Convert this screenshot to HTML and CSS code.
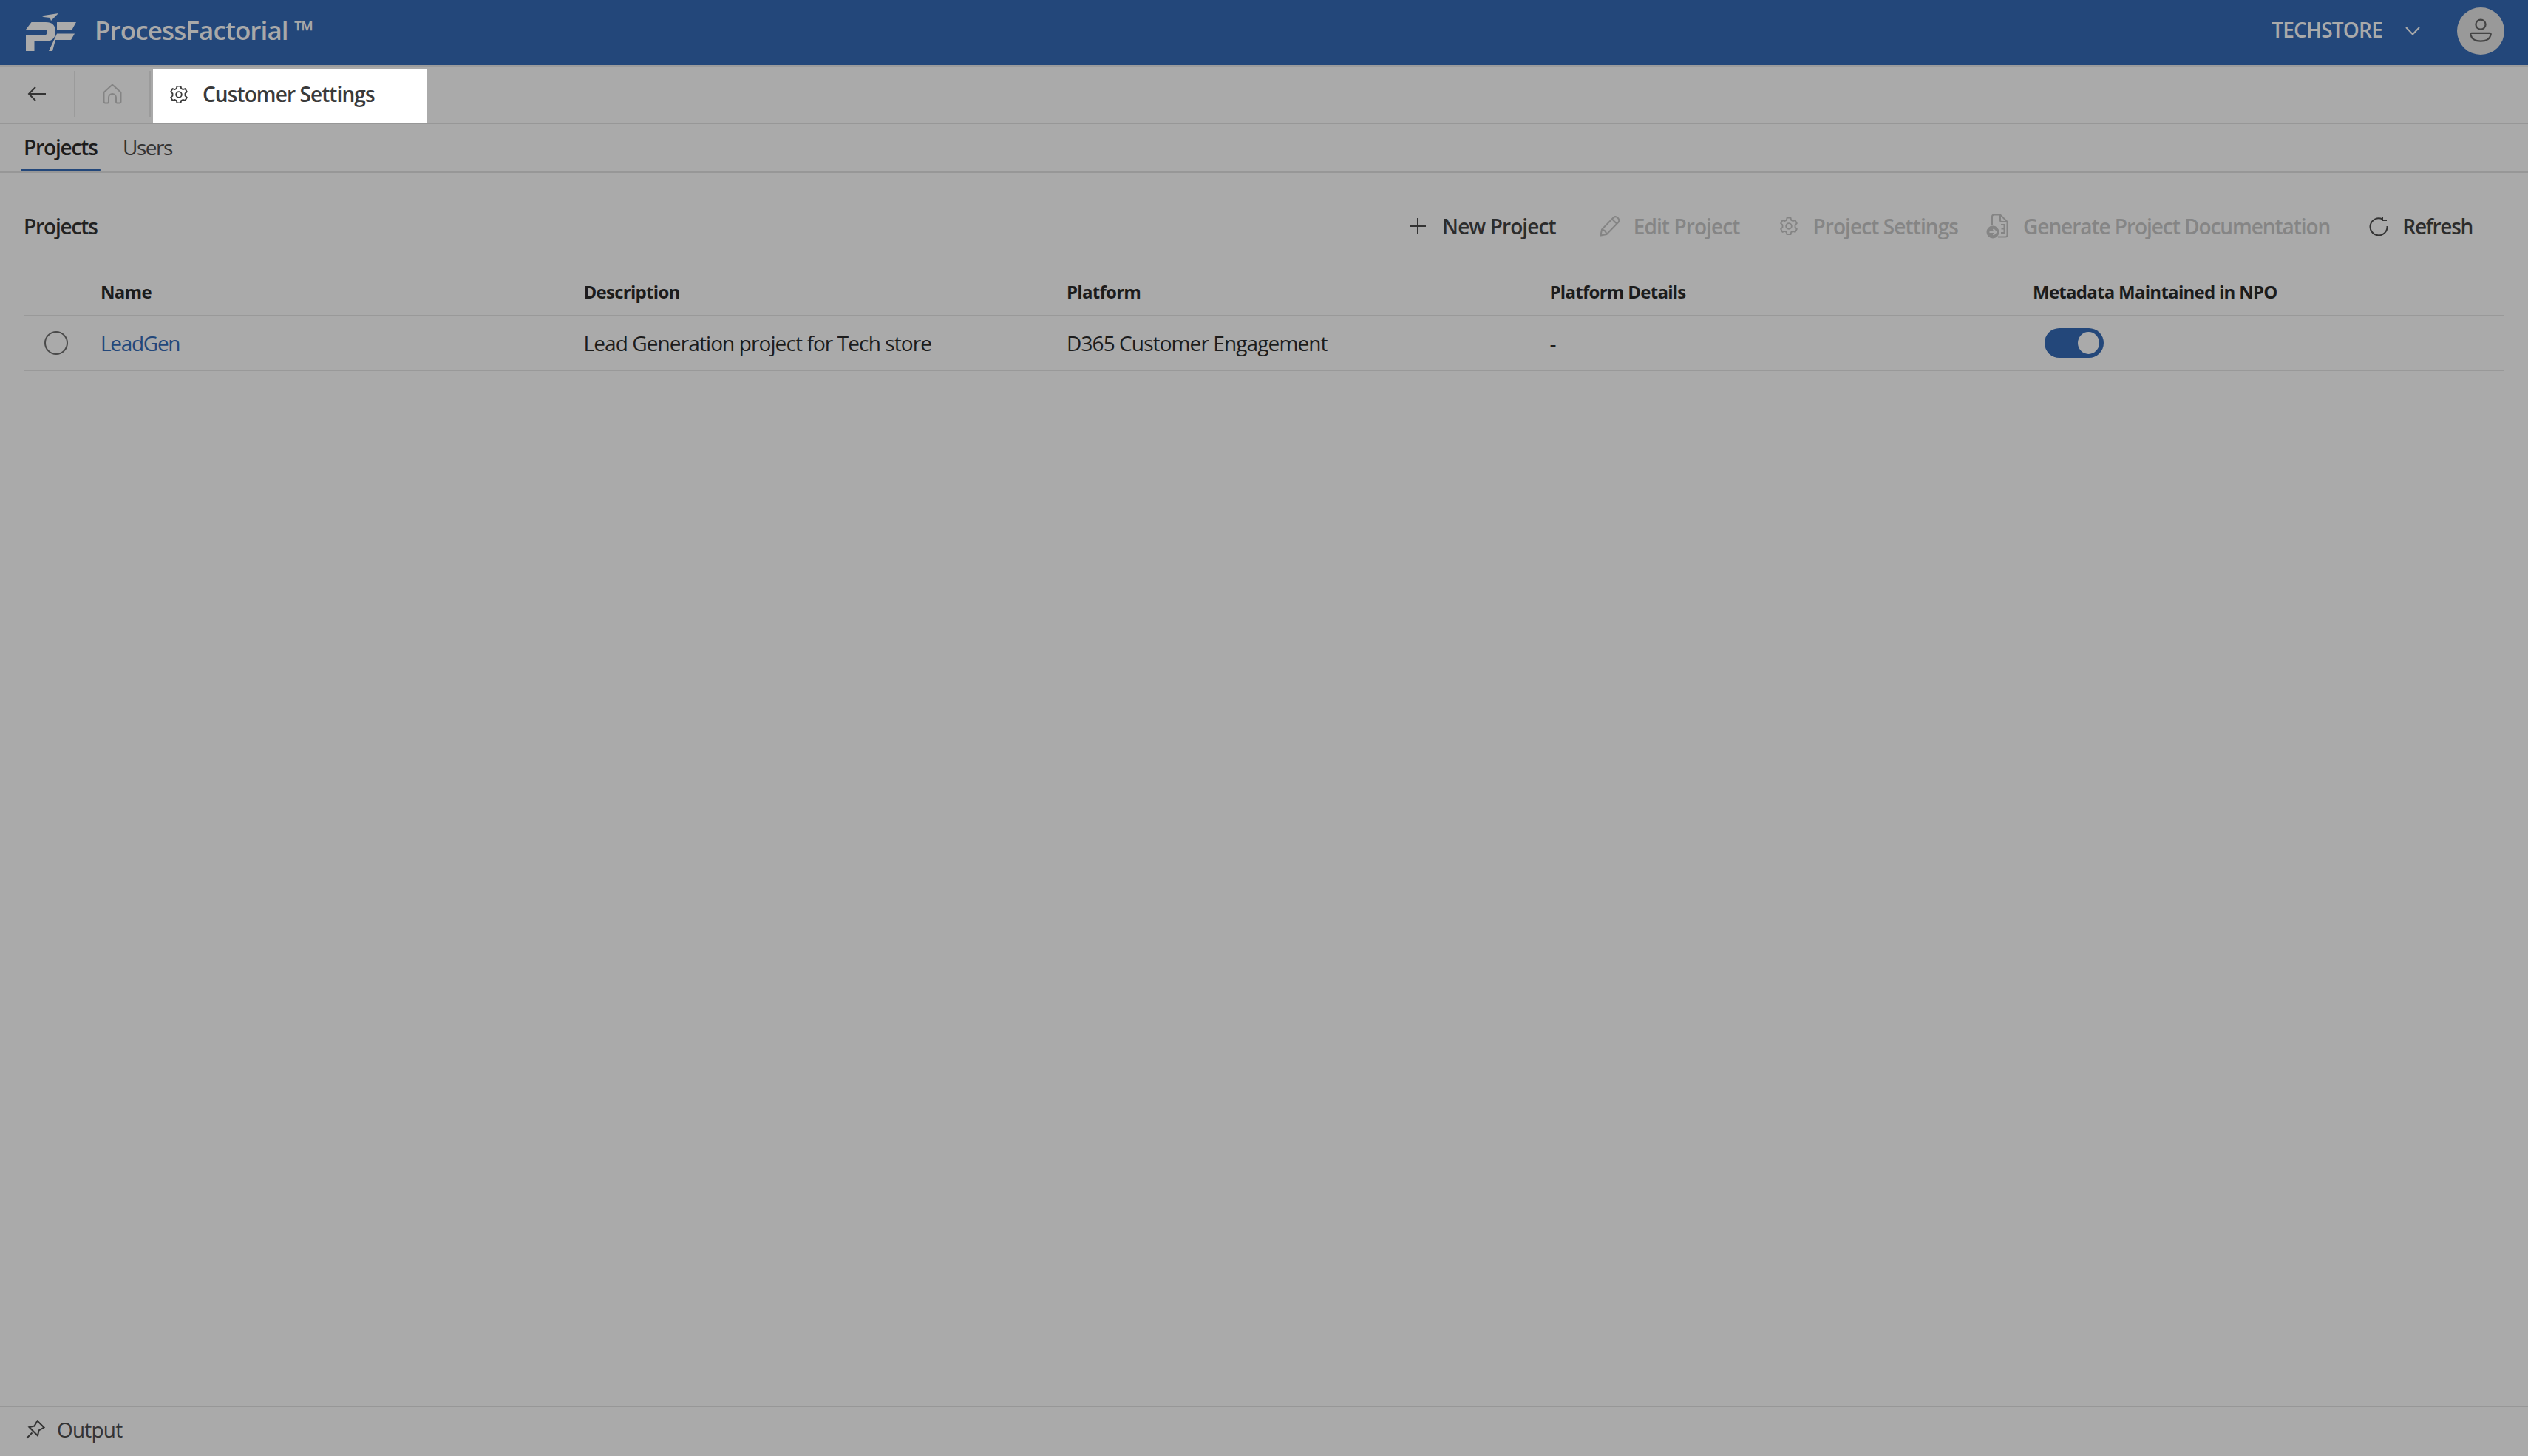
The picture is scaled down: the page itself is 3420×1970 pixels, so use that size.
FILE: index.html
```html
<!DOCTYPE html>
<html lang="en">
<head>
<meta charset="utf-8">
<title>ProcessFactorial</title>
<link rel="stylesheet" href="styles.css">
</head>
<body>
<div class="app">
  <header class="topbar">
    <div class="brand">
      <svg class="logo" viewBox="35 12 70 56" width="70" height="56">
        <path class="logo-fill" d="M56 17.500L79 14L69 24L67.500 20L59 19Z"/>
        <path class="logo-fill" d="M35 36L42.500 26H62Q75 26 75 39Q75 51.500 62 52H46.500V65H35V43.500H60Q64 43 64 39.500Q64 36 60 36Z"/>
        <path class="logo-fill" d="M77 26H103L97.500 36H77Z"/>
        <path class="logo-fill" d="M77 41.500H101L96 50H75L71 65H66Z"/>
      </svg>
      <span class="brand-name">ProcessFactorial ™</span>
    </div>
    <div class="account">
      <span class="tenant">TECHSTORE</span>
      <svg class="chev" viewBox="0 0 20 12" width="20" height="12"><path d="M1 1L10 10.500L19 1"/></svg>
      <div class="avatar">
        <svg viewBox="0 0 32 36" width="30" height="34"><circle cx="16" cy="8.500" r="7"/><path d="M3 21H29Q31 21 30.500 23.500C29 29.500 23 32.500 16 32.500C9 32.500 3 29.500 1.500 23.500Q1 21 3 21Z"/></svg>
      </div>
    </div>
  </header>

  <nav class="tabstrip">
    <button class="nav-btn">
      <svg viewBox="0 0 26 22" width="26" height="22"><path class="s-dark" d="M25 11H2M11 2L2 11L11 20"/></svg>
    </button>
    <button class="nav-btn">
      <svg viewBox="0 0 26 28" width="26" height="28"><path class="s-mute" d="M1.500 12L13 1.500L24.500 12V24.500Q24.500 26.500 22.500 26.500H19.500Q18 26.500 18 24.500V19A5 5 0 0 0 8 19V24.500Q8 26.500 6.500 26.500H3.500Q1.500 26.500 1.500 24.500Z"/></svg>
    </button>
    <div class="open-tab">
      <svg class="gear" viewBox="1 1 22 22" width="24" height="24"><use href="#gear"/></svg>
      <span>Customer Settings</span>
    </div>
  </nav>

  <div class="subtabs">
    <div class="subtab active">Projects</div>
    <div class="subtab plain">Users</div>
  </div>

  <main class="content">
    <div class="section-head">
      <h1>Projects</h1>
      <div class="actions">
        <button class="action w-new">
          <svg viewBox="0 0 22 22" width="22" height="22"><path class="s-dark" d="M11 0V22M0 11H22"/></svg>
          <span>New Project</span>
        </button>
        <button class="action off w-edit">
          <svg viewBox="0 0 28 28" width="28" height="28"><path class="s-mute" d="M1.500 26.500L3 18.500L19 2Q21.500 0 24.500 2.500Q27.500 5.500 25.500 8.500L9.500 25ZM3 18.500Q8 19 9.500 25M17 4.500L23 10.500"/></svg>
          <span>Edit Project</span>
        </button>
        <button class="action off w-set">
          <svg class="gear-off" viewBox="1 1 22 22" width="24" height="24"><use href="#gear"/></svg>
          <span>Project Settings</span>
        </button>
        <button class="action off w-gen">
          <svg viewBox="0 0 30 34" width="30" height="34">
            <path class="s-mute" d="M8 16V4Q8 1.500 10.500 1.500H19L28.500 11V29Q28.500 31.500 26 31.500H16M19 1.500V9Q19 11 21 11H28.500M20 15H24.500V26H20M20.500 20.500H24"/>
            <circle class="doc-dot" cx="9" cy="25" r="8.500"/>
            <path class="doc-arrow" d="M4.500 25H13M9.500 21L13.500 25L9.500 29"/>
          </svg>
          <span>Generate Project Documentation</span>
        </button>
        <button class="action w-ref">
          <svg viewBox="0 0 26 26" width="26" height="26"><path class="s-dark" d="M18 3.500A11.500 11.500 0 1 0 24.500 13M18 -1V5H24"/></svg>
          <span>Refresh</span>
        </button>
      </div>
    </div>

    <div class="grid head">
      <div></div>
      <div>Name</div>
      <div>Description</div>
      <div>Platform</div>
      <div>Platform Details</div>
      <div>Metadata Maintained in NPO</div>
    </div>
    <div class="grid row">
      <div class="radio-cell"><span class="radio"></span></div>
      <div><a class="link">LeadGen</a></div>
      <div>Lead Generation project for Tech store</div>
      <div>D365 Customer Engagement</div>
      <div>-</div>
      <div><span class="toggle"><span class="thumb"></span></span></div>
    </div>
  </main>

  <footer class="output">
    <svg viewBox="0 0 26 26" width="26" height="26"><path class="s-dark" d="M1 25L8.500 17.500M15.500 1.500L24.500 10.500L17.500 14.500L16 21.500L4.500 10L11.500 8.500Z"/></svg>
    <span>Output</span>
  </footer>
</div>

<svg class="defs" width="0" height="0">
  <defs>
    <g id="gear" stroke-linejoin="round">
      <path d="M9.800 1.500H14.200L14.900 4.500L16.900 5.600L19.800 4.700L22 8.500L19.800 10.600V13.400L22 15.500L19.800 19.300L16.900 18.400L14.900 19.500L14.200 22.500H9.800L9.100 19.500L7.100 18.400L4.200 19.300L2 15.500L4.200 13.400V10.600L2 8.500L4.200 4.700L7.100 5.600L9.100 4.500Z"/>
      <circle cx="12" cy="12" r="3.500"/>
    </g>
  </defs>
</svg>
</body>
</html>
```

FILE: styles.css
```css
* { box-sizing: border-box; }
html, body { margin: 0; height: 100%; }
body {
  background: #aaaaaa;
  color: #1c1c1c;
  font-family: "Open Sans", "Noto Sans", sans-serif;
  font-size: 28px;
  letter-spacing: -0.9px;
}
button { font: inherit; letter-spacing: inherit; background: none; border: 0; padding: 0; color: inherit; }
.defs { position: absolute; }
svg { display: block; flex: none; }
.s-dark, .s-mute { fill: none; stroke-width: 2; }
.s-dark { stroke: #333; }
.s-mute { stroke: #848484; }

.app { display: flex; flex-direction: column; height: 1970px; overflow: hidden; }

.topbar {
  height: 90px;
  flex: none;
  background: #23477a;
  border-bottom: 2px solid #9c9c9c;
  display: flex;
  justify-content: space-between;
  align-items: center;
  padding: 0 32px 2px 35px;
}
.brand { display: flex; align-items: center; gap: 23px; }
.logo { margin-top: 2px; }
.logo-fill { fill: #ababab; }
.brand-name { font-size: 35px; font-weight: 600; color: #a9a9a9; letter-spacing: -0.9px; margin-top: -5px; }
.account { display: flex; align-items: center; }
.tenant { font-size: 28px; font-weight: 600; color: #aaaaaa; letter-spacing: -0.8px; margin-right: 31px; margin-top: -6px; }
.chev { margin-right: 50px; margin-top: -2px; }
.chev path { fill: none; stroke: #a9a9a9; stroke-width: 2; }
.avatar {
  width: 64px; height: 64px; border-radius: 50%;
  background: #999999;
  display: flex; align-items: center; justify-content: center;
  margin-top: -2px;
}
.avatar circle, .avatar path { fill: none; stroke: #444; stroke-width: 2.4; }

.tabstrip {
  height: 78px;
  flex: none;
  display: flex;
  align-items: flex-end;
  padding-top: 3px;
  border-bottom: 2px solid #979797;
}
.nav-btn {
  height: 62px;
  margin-bottom: 8px;
  width: 102px;
  display: flex; align-items: center; justify-content: center;
  border-right: 2px solid #9b9b9b;
}
.open-tab {
  width: 370px;
  height: 73px;
  margin-left: 3px;
  background: #ffffff;
  color: #3a3a3a;
  font-weight: 600;
  display: flex; align-items: center; gap: 20px;
  padding: 0 0 5px 23px;
}
.gear { fill: none; stroke: #3a3a3a; stroke-width: 1.700; margin-top: 1px; }
.gear-off { fill: none; stroke: #848484; stroke-width: 1.700; }

.subtabs {
  height: 66px;
  flex: none;
  display: flex;
  border-bottom: 2px solid #979797;
  padding-left: 28px;
  gap: 26px;
}
.subtab { padding: 0 4px; display: flex; align-items: center; height: 64px; padding-bottom: 2px; color: #333; position: relative; }
.subtab.active { font-weight: 600; color: #1c1c1c; width: 108px; letter-spacing: -1.15px; }
.subtab.plain { letter-spacing: -1.5px; }
.subtab.active::after {
  content: "";
  position: absolute; left: 0; right: 0; bottom: 0;
  height: 4px; border-radius: 2px; background: #23477a;
}

.content { flex: 1; padding: 0 32px; }
.section-head {
  height: 144px;
  display: flex;
  justify-content: space-between;
  align-items: center;
}
h1 { margin: 0; font: inherit; font-weight: 600; color: #222; letter-spacing: -1.15px; }
.actions { display: flex; align-items: center; padding-right: 43px; }
.action { display: flex; align-items: center; gap: 22px; font-weight: 600; color: #2c2c2c; white-space: nowrap; }
.action.off { color: #858585; }
.w-new { margin-right: 59px; }
.w-edit { gap: 18px; margin-right: 55px; }
.w-set { gap: 20px; margin-right: 38px; }
.w-gen { gap: 20px; margin-right: 53px; letter-spacing: -1.05px; }
.w-ref { gap: 19px; letter-spacing: -1.3px; }
.doc-dot { fill: #858585; }
.doc-arrow { fill: none; stroke: #aaa; stroke-width: 2; }

.grid {
  display: grid;
  grid-template-columns: 104px repeat(4, 653.500px) 1fr;
  align-items: center;
}
.head {
  height: 50px;
  border-bottom: 2px solid #999;
  font-size: 24px;
  font-weight: 700;
  letter-spacing: -0.72px;
  padding-bottom: 15px;
}
.row { height: 74px; border-bottom: 2px solid #999; padding-bottom: 1px; }
.radio-cell { display: flex; justify-content: center; padding-right: 16px; }
.radio { width: 32px; height: 32px; border-radius: 50%; border: 2px solid #4a4a4a; }
.link { color: #23477a; letter-spacing: -1.3px; }
.toggle {
  display: block;
  width: 80px; height: 40px; margin-left: 16px;
  background: #23477a; border-radius: 20px;
  padding: 5px 6px 5px 45px;
}
.thumb { display: block; width: 29px; height: 30px; border-radius: 50%; background: #aaaaaa; }

.output {
  height: 68px;
  flex: none;
  border-top: 2px solid #979797;
  display: flex; align-items: center; gap: 16px;
  padding: 0 0 6px 35px;
  color: #333;
  letter-spacing: -0.8px;
}
```
